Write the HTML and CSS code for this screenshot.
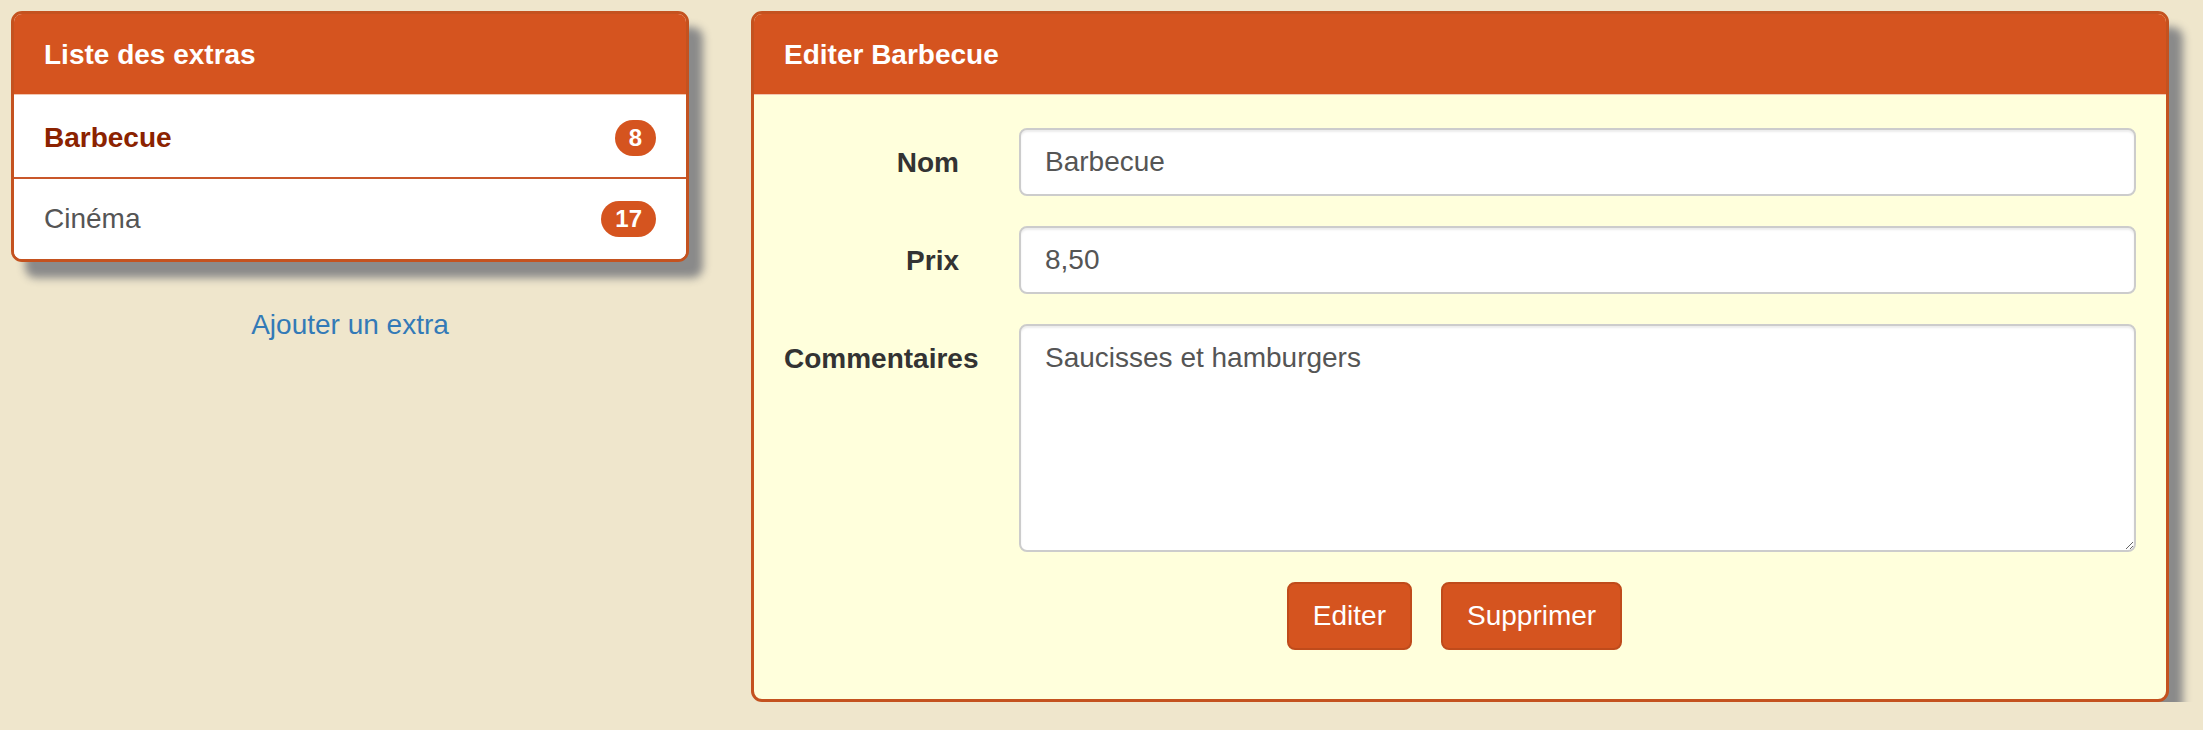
FILE: index.html
```html
<!DOCTYPE html>
<html lang="fr">
<head>
<meta charset="utf-8">
<title>Extras</title>
<link rel="stylesheet" href="styles.css">
</head>
<body>
<div class="page">
  <div class="side">
    <div class="panel">
      <div class="panel-heading">Liste des extras</div>
      <ul class="list">
        <li class="item active"><span>Barbecue</span><span class="badge">8</span></li>
        <li class="item"><span>Cinéma</span><span class="badge">17</span></li>
      </ul>
    </div>
    <a class="add-link" href="#">Ajouter un extra</a>
  </div>
  <div class="panel edit">
    <div class="panel-heading">Editer Barbecue</div>
    <form class="panel-body">
      <div class="form-row">
        <label class="label">Nom</label>
        <input class="control" type="text" value="Barbecue">
      </div>
      <div class="form-row">
        <label class="label">Prix</label>
        <input class="control" type="text" value="8,50">
      </div>
      <div class="form-row">
        <label class="label">Commentaires</label>
        <textarea class="control area">Saucisses et hamburgers</textarea>
      </div>
      <div class="actions">
        <button class="btn" type="button">Editer</button>
        <button class="btn" type="button">Supprimer</button>
      </div>
    </form>
  </div>
</div>
</body>
</html>
```

FILE: styles.css
```css
html, body {
  margin: 0;
  padding: 0;
  background: #efe6cc;
  font-family: "Liberation Sans", Arial, sans-serif;
  font-size: 28px;
  line-height: 40px;
  color: #333;
}

.page {
  display: grid;
  grid-template-columns: 678px 1fr;
  column-gap: 62px;
  align-items: start;
  padding: 11px 34px 0 11px;
}

.side {
  display: flex;
  flex-direction: column;
}

.panel {
  border: 3px solid #c4521f;
  border-radius: 11px;
  background: #fff;
  box-shadow: 14px 16px 8px #8a8a8a;
  overflow: hidden;
}

.panel-heading {
  background: #d5541f;
  color: #fff;
  font-weight: bold;
  padding: 21px 30px 19px 30px;
  height: 40px;
  border-bottom: 1px solid #f2c6b0;
}

.list {
  list-style: none;
  margin: 0;
  padding: 0;
}

.item {
  display: flex;
  justify-content: space-between;
  align-items: center;
  box-sizing: border-box;
  height: 80px;
  padding: 0 30px;
  color: #555;
  background: #fff;
}

.item + .item {
  box-sizing: content-box;
  border-top: 2px solid #c9572a;
}

.item.active {
  color: #8b2200;
  font-weight: bold;
  height: 82px;
  padding-top: 4px;
}

.badge {
  display: inline-block;
  background: #d5541f;
  color: #fff;
  font-weight: bold;
  font-size: 24px;
  line-height: 24px;
  padding: 6px 14px;
  border-radius: 20px;
}

.add-link {
  margin-top: 43px;
  text-align: center;
  color: #337ab7;
  text-decoration: none;
}

.edit {
  background: #ffffdc;
}

.panel-body {
  margin: 0;
  padding: 33px 30px 49px 30px;
  display: flex;
  flex-direction: column;
  gap: 30px;
}

.form-row {
  display: grid;
  grid-template-columns: 175px 1fr;
  column-gap: 60px;
  align-items: start;
}

.label {
  font-weight: bold;
  text-align: right;
  padding-top: 15px;
  white-space: nowrap;
}

.control {
  box-sizing: border-box;
  width: 100%;
  height: 68px;
  padding: 12px 24px;
  font-family: "Liberation Sans", Arial, sans-serif;
  font-size: 28px;
  line-height: 40px;
  color: #555;
  background: #fff;
  border: 2px solid #ccc;
  border-radius: 8px;
  box-shadow: inset 0 2px 2px rgba(0, 0, 0, 0.075);
  margin: 0;
}

.area {
  height: 228px;
  resize: vertical;
  display: block;
}

.actions {
  display: flex;
  justify-content: center;
  gap: 29px;
  padding-right: 11px;
}

.btn {
  box-sizing: border-box;
  height: 68px;
  padding: 12px 24px;
  font-family: "Liberation Sans", Arial, sans-serif;
  font-size: 28px;
  line-height: 40px;
  color: #fff;
  background: #d5541f;
  border: 2px solid #bf4b1b;
  border-radius: 8px;
  cursor: pointer;
}
```
